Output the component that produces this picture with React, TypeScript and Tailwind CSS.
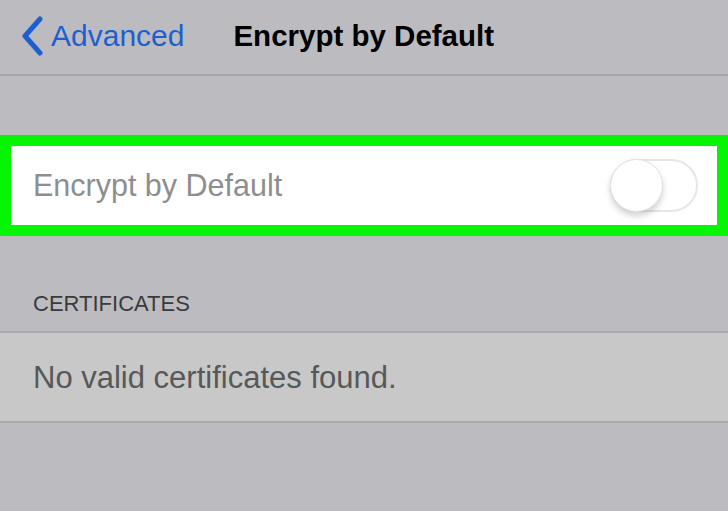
const font = { fontFamily: '"Liberation Sans", Arial, sans-serif' };

const Toggle = () => (
    <div className="relative h-[53px] w-[88px] shrink-0 rounded-full border-2 border-[#e6e6e8] bg-white">
        {/* knob */}
        <div className="absolute -left-[2px] -top-[2px] h-[53px] w-[53px] rounded-full border border-[#e2e2e4] bg-white shadow-[0_4px_6px_rgba(0,0,0,0.18)]" />
    </div>
);

export default function App() {
    return (
        <div className="flex h-[511px] w-[728px] flex-col overflow-hidden bg-[#bcbbc0]" style={font}>
            {/* nav bar */}
            <div className="flex h-[76px] shrink-0 items-center border-b-2 border-[#a6a5aa] pb-[3px]">
                <div className="flex items-center pl-[20px]">
                    <svg width="24" height="40" viewBox="0 0 24 40" fill="none">
                        <path d="M20 3 L5 20 L20 37" stroke="#1d5fcf" strokeWidth="5" strokeLinecap="round" strokeLinejoin="round" />
                    </svg>
                    <span className="ml-[7px] text-[30px] leading-none text-[#1d5fcf]">Advanced</span>
                </div>
                <span className="ml-[49px] text-[29.5px] font-bold leading-none text-black">Encrypt by Default</span>
            </div>

            {/* encrypt toggle row, highlighted */}
            <div className="mt-[59px] flex h-[101px] shrink-0 items-center justify-between border-[11px] border-[#05f505] bg-white pr-[19px] pl-[22px]">
                <span className="text-[30.5px] leading-none text-[#8e8e90]">Encrypt by Default</span>
                <Toggle />
            </div>

            {/* certificates */}
            <div className="flex h-[95px] shrink-0 items-end pb-[16px] pl-[33px]">
                <span className="text-[22px] leading-none text-[#3a3a3c]">CERTIFICATES</span>
            </div>
            <div className="flex h-[92px] shrink-0 items-center border-y-2 border-[#a9a9ae] bg-[#c8c8c8] pl-[33px]">
                <span className="text-[31px] leading-none text-[#58585a]">No valid certificates found.</span>
            </div>
        </div>
    );
}
